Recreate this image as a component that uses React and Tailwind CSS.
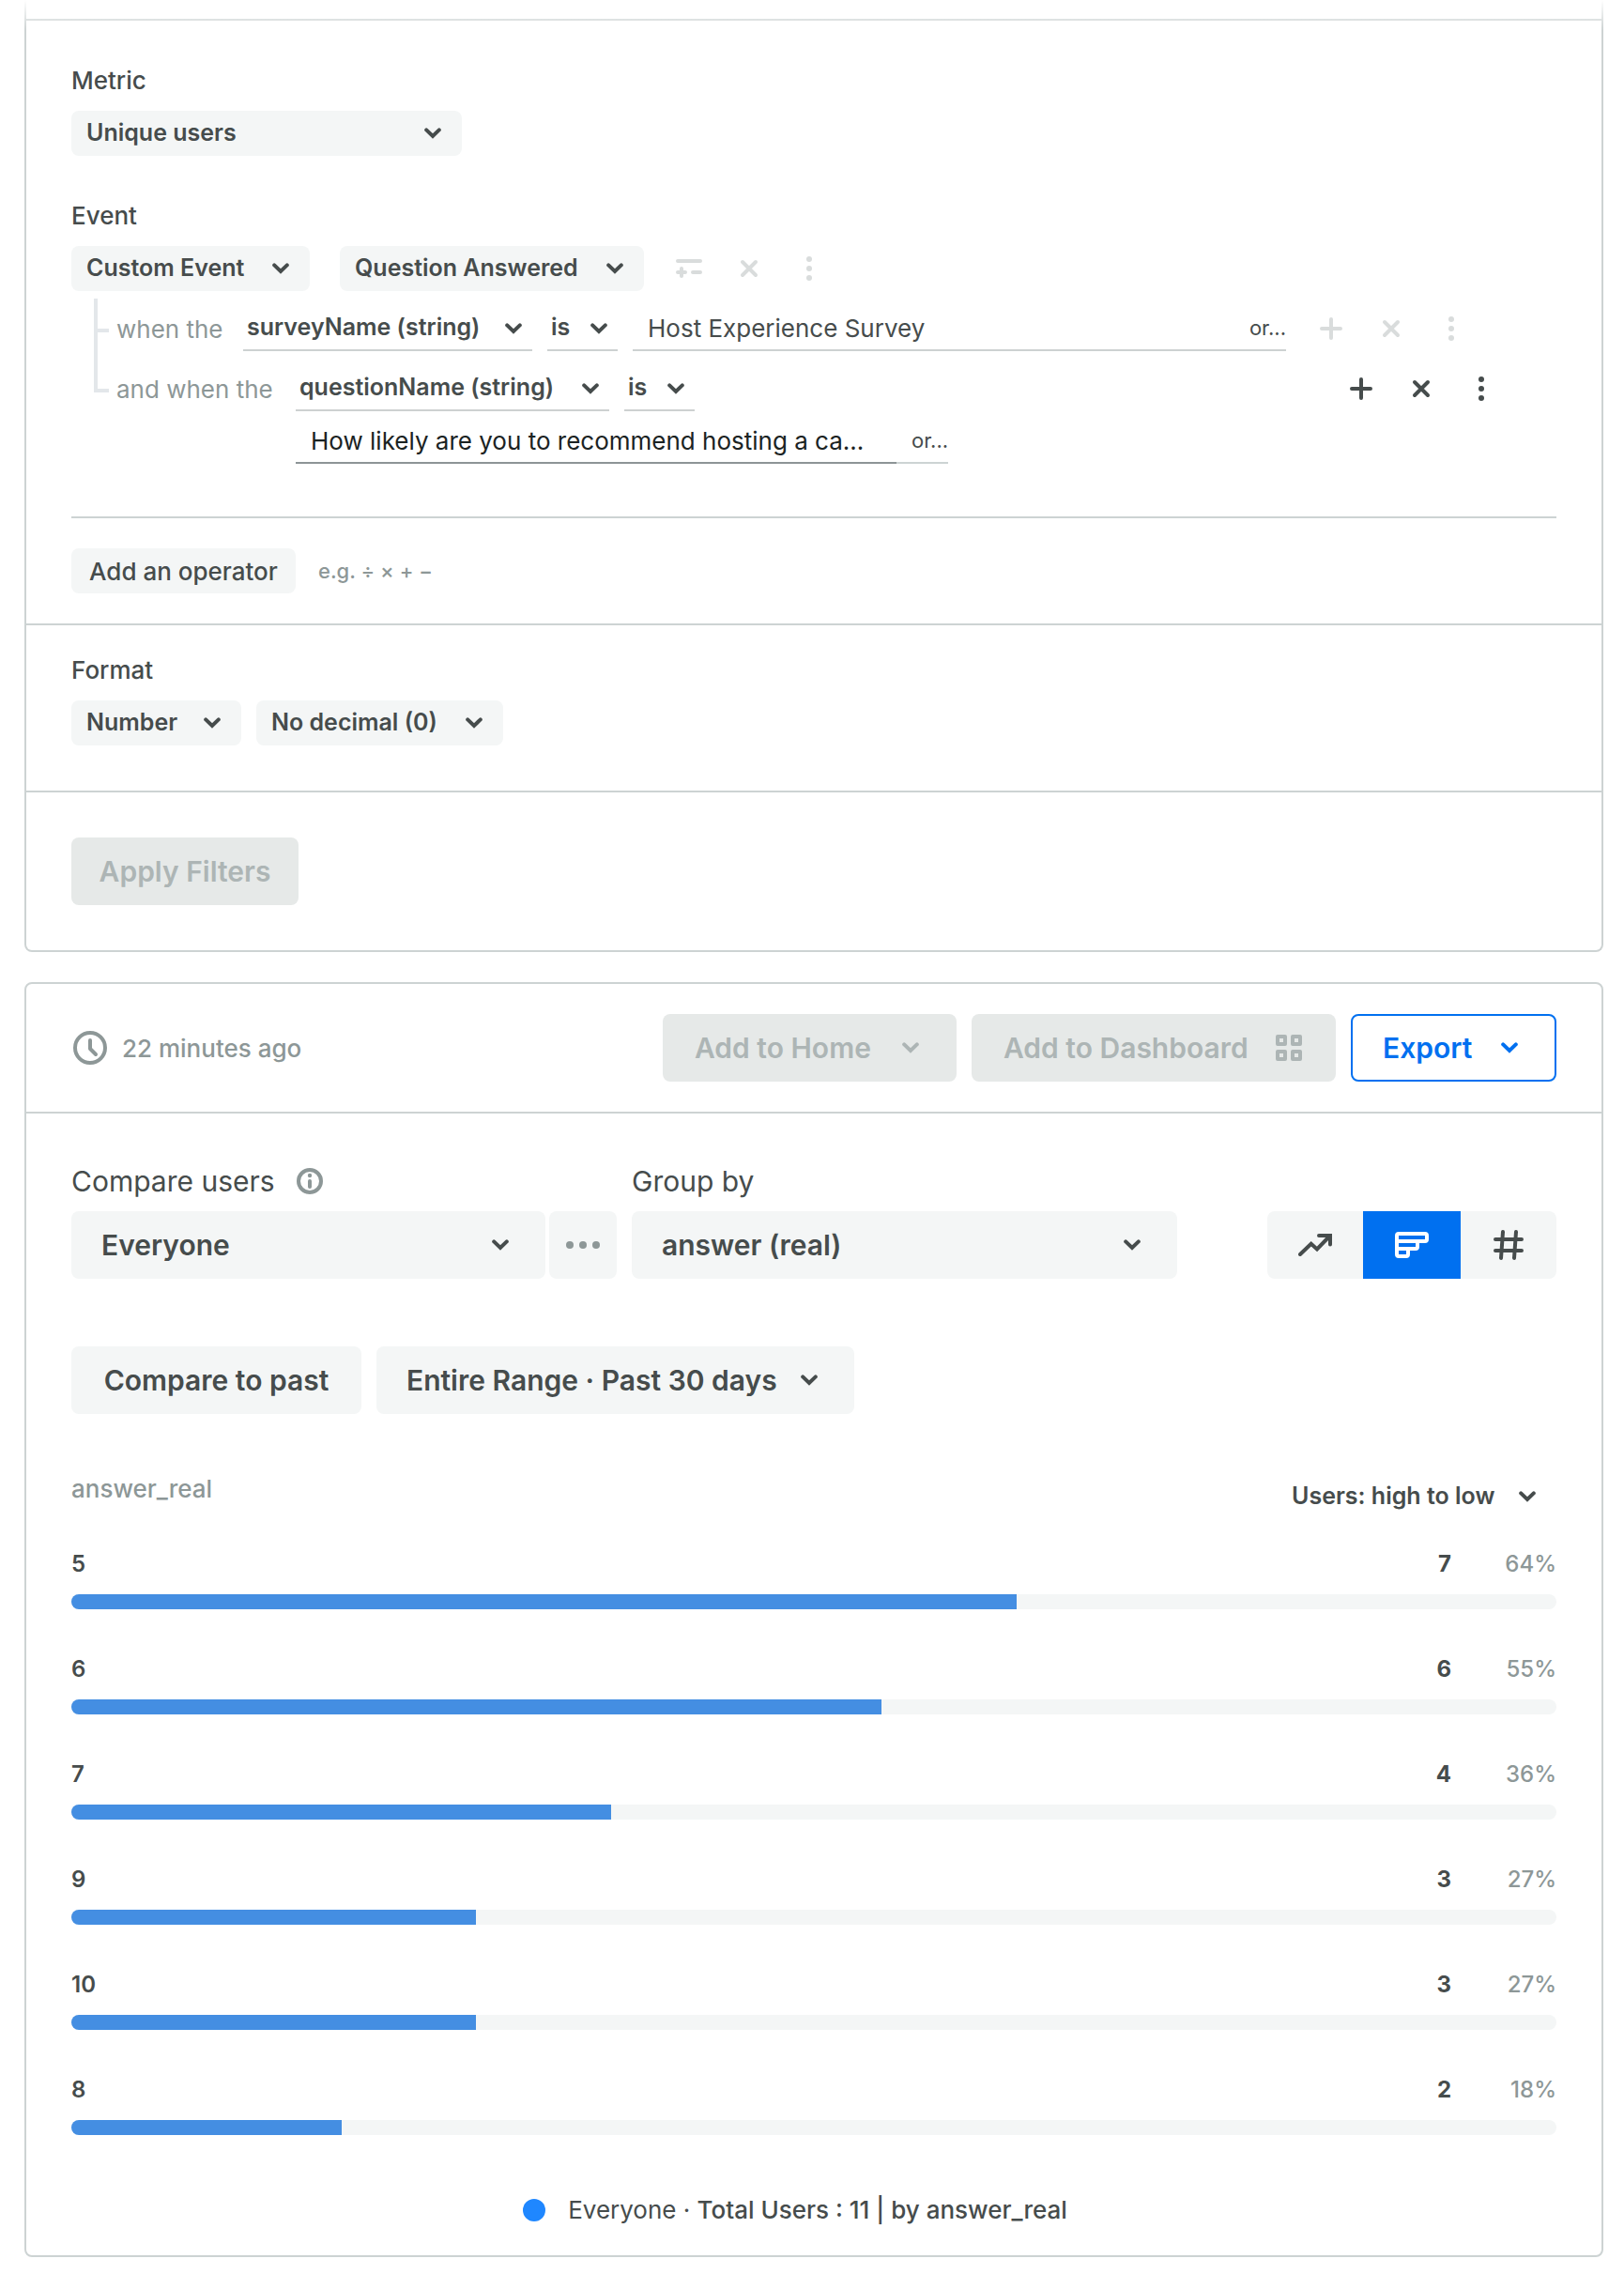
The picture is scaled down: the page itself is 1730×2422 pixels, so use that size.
const RESULTS = [
    { answer: '5', users: 7, share: '64%' },
    { answer: '6', users: 6, share: '55%' },
    { answer: '7', users: 4, share: '36%' },
    { answer: '9', users: 3, share: '27%' },
    { answer: '10', users: 3, share: '27%' },
    { answer: '8', users: 2, share: '18%' },
]
const TOTAL_USERS = 11

// Icons
const Chevron = ({ className = '' }) => (
    <svg className={`h-3 w-[18px] shrink-0 ${className}`} viewBox="0 0 18 12" fill="none" stroke="currentColor" strokeWidth="4" strokeLinecap="round" aria-hidden="true">
        <path d="M2.2 2.4 9 9l6.8-6.6" />
    </svg>
)

const PlusIcon = () => (
    <svg className="size-6" viewBox="0 0 24 24" stroke="currentColor" strokeWidth="4" strokeLinecap="round" aria-hidden="true">
        <path d="M12 2v20M2 12h20" />
    </svg>
)

const CloseIcon = () => (
    <svg className="size-5" viewBox="0 0 20 20" stroke="currentColor" strokeWidth="4" strokeLinecap="round" aria-hidden="true">
        <path d="m3 3 14 14M17 3 3 17" />
    </svg>
)

const KebabIcon = () => (
    <svg className="h-[26px] w-1.5" viewBox="0 0 6 26" fill="currentColor" aria-hidden="true">
        <circle cx="3" cy="3" r="3" />
        <circle cx="3" cy="13" r="3" />
        <circle cx="3" cy="23" r="3" />
    </svg>
)

const OperatorIcon = () => (
    <svg className="h-5 w-7" viewBox="0 0 28 20" stroke="currentColor" strokeWidth="4" strokeLinecap="round" aria-hidden="true">
        <path d="M2 2h24M2 14h8M6 10v8M18 14h8" />
    </svg>
)

const ClockIcon = () => (
    <svg className="size-9" viewBox="0 0 36 36" fill="none" stroke="currentColor" strokeWidth="4" strokeLinecap="round" strokeLinejoin="round" aria-hidden="true">
        <circle cx="18" cy="18" r="16" />
        <path d="M18 10v9l6 6" />
    </svg>
)

const InfoIcon = () => (
    <svg className="size-7" viewBox="0 0 28 28" fill="none" stroke="currentColor" strokeLinecap="round" aria-hidden="true">
        <circle cx="14" cy="14" r="12" strokeWidth="4" />
        <path d="M14 14v6" strokeWidth="4" />
        <circle cx="14" cy="8" r="2.2" fill="currentColor" stroke="none" />
    </svg>
)

const GridIcon = () => (
    <svg className="size-7" viewBox="0 0 28 28" fill="none" stroke="currentColor" strokeWidth="4" strokeLinejoin="round" aria-hidden="true">
        <path d="M2 2h8v8H2zM18 2h8v8h-8zM2 18h8v8H2zM18 18h8v8h-8z" />
    </svg>
)

const TrendIcon = () => (
    <svg className="h-6 w-9" viewBox="0 0 36 24" fill="none" stroke="currentColor" strokeWidth="4" strokeLinecap="round" aria-hidden="true">
        <path d="M2 22 13.7 10.7l6.3 5.800L33.500 2.500" />
        <path d="M22 2h12v9.500" />
    </svg>
)

const BarsIcon = () => (
    <svg className="h-7 w-9" viewBox="0 0 36 28" fill="none" stroke="currentColor" strokeWidth="4" aria-hidden="true">
        <path d="M4 2h28a2 2 0 0 1 2 2v4a2 2 0 0 1-2 2H2V4a2 2 0 0 1 2-2z" />
        <path d="M2 10h22v6a2 2 0 0 1-2 2H2z" />
        <path d="M2 18h12v6a2 2 0 0 1-2 2H4a2 2 0 0 1-2-2z" />
    </svg>
)

const HashIcon = () => (
    <svg className="size-8" viewBox="0 0 32 32" stroke="currentColor" strokeWidth="4" strokeLinecap="round" aria-hidden="true">
        <path d="M10 2 8 30M24 2l-2 28M2 10h28M2 22h28" />
    </svg>
)

// Select with its own chevron stacked in the same grid cell
function Dropdown({ id, label, value, variant = 'small', className = '' }) {
    const boxes = {
        small: 'h-12 rounded-lg bg-[#f4f6f6] pl-4 text-[25px]',
        large: 'h-[72px] rounded-lg bg-[#f4f6f6] pl-8 text-[30px]',
        line: 'h-12 border-b-2 border-[#cdd1d1] pl-1 text-[25px]',
        plain: 'h-12 text-[25px]',
    }
    const arrows = { small: 'mr-[22px]', large: 'mr-[39px]', line: 'mr-[11px]', plain: 'mr-[22px]' }
    return (
        <div className={`grid items-center ${className}`}>
            <select id={id} aria-label={label} className={`col-start-1 row-start-1 w-full appearance-none font-semibold outline-none ${boxes[variant]}`}>
                <option>{value}</option>
            </select>
            <Chevron className={`pointer-events-none col-start-1 row-start-1 justify-self-end ${arrows[variant]}`} />
        </div>
    )
}

function IconButton({ label, children }) {
    return (
        <button type="button" aria-label={label} className="flex h-12 w-16 items-center justify-center">
            {children}
        </button>
    )
}

function RowActions({ className = '' }) {
    return (
        <div className={`flex shrink-0 ${className}`}>
            <IconButton label="Add condition"><PlusIcon /></IconButton>
            <IconButton label="Remove condition"><CloseIcon /></IconButton>
            <IconButton label="More"><KebabIcon /></IconButton>
        </div>
    )
}

function EventFilters() {
    return (
        <div className="flex pl-6">
            <div className="mt-2 w-4 shrink-0">
                <div className="h-9 border-b-4 border-l-4 border-[#e3e7ea]" />
                <div className="h-16 border-b-4 border-l-4 border-[#e3e7ea]" />
            </div>
            <div className="min-w-0 flex-1 pt-4 pl-2">
                <div className="flex items-center pr-20">
                    <span className="w-[135px] shrink-0 text-[26px] text-[#8d9797]">when the</span>
                    <Dropdown label="Property" value="surveyName (string)" variant="line" className="w-[308px] shrink-0" />
                    <Dropdown label="Comparison" value="is" variant="line" className="ml-4 w-[75px] shrink-0" />
                    <div className="ml-4 flex h-12 min-w-0 flex-1 items-center border-b-2 border-[#cdd1d1]">
                        <input aria-label="Survey name" defaultValue="Host Experience Survey" className="min-w-0 flex-1 pl-4 text-[26px] outline-none" />
                        <button type="button" className="text-[22px]">or...</button>
                    </div>
                    <RowActions className="ml-4 text-[#d9dcdc]" />
                </div>
                <div className="mt-4 flex items-center pr-12">
                    <span className="w-[191px] shrink-0 text-[26px] text-[#8d9797]">and when the</span>
                    <Dropdown label="Property" value="questionName (string)" variant="line" className="w-[334px] shrink-0" />
                    <Dropdown label="Comparison" value="is" variant="line" className="ml-4 w-[75px] shrink-0" />
                    <RowActions className="ml-auto" />
                </div>
                <div className="mt-2 flex pl-[191px]">
                    <input
                        aria-label="Question name"
                        defaultValue="How likely are you to recommend hosting a ca..."
                        className="h-12 w-[640px] border-b-2 border-[#8d9496] px-4 text-[26px] text-[#1b2323] outline-none"
                    />
                    <button type="button" className="h-12 border-b-2 border-[#cdd3d3] pl-4 text-[22px]">or...</button>
                </div>
            </div>
        </div>
    )
}

function QueryPanel() {
    return (
        <section className="rounded-b-lg border-2 border-t-0 border-[#cdd3d3]">
            <div className="h-[22px] border-b-2 border-[#cdd3d3]" />
            <div className="border-b-2 border-[#cdd3d3] px-12 pt-12 pb-8">
                <label htmlFor="metric" className="block text-[26px] leading-8 font-medium">Metric</label>
                <Dropdown id="metric" value="Unique users" className="mt-4 w-[416px]" />

                <label htmlFor="event" className="mt-12 block text-[26px] leading-8 font-medium">Event</label>
                <div className="mt-4 flex items-center">
                    <Dropdown id="event" value="Custom Event" className="w-[254px]" />
                    <Dropdown label="Event name" value="Question Answered" className="ml-8 w-[324px]" />
                    <div className="ml-4 flex text-[#d9dcdc]">
                        <IconButton label="Add operator to event"><OperatorIcon /></IconButton>
                        <IconButton label="Remove event"><CloseIcon /></IconButton>
                        <IconButton label="More"><KebabIcon /></IconButton>
                    </div>
                </div>
                <EventFilters />

                <hr className="mt-14 border-t-2 border-[#cdd3d3]" />
                <div className="mt-8 flex items-center gap-6">
                    <button type="button" className="h-12 w-[239px] rounded-lg bg-[#f4f6f6] text-[26px] font-medium">Add an operator</button>
                    <span className="text-[22px] font-medium text-[#8d9797]">e.g. ÷ × + −</span>
                </div>
            </div>
            <div className="border-b-2 border-[#cdd3d3] px-12 pt-8 pb-12">
                <label htmlFor="format" className="block text-[26px] leading-8 font-medium">Format</label>
                <div className="mt-4 flex gap-4">
                    <Dropdown id="format" value="Number" className="w-[181px]" />
                    <Dropdown label="Decimals" value="No decimal (0)" className="w-[263px]" />
                </div>
            </div>
            <div className="p-12">
                <button type="button" disabled className="h-[72px] w-[242px] rounded-lg bg-[#e6e9e8] text-[30px] font-semibold text-[#adb5b5]">
                    Apply Filters
                </button>
            </div>
        </section>
    )
}

function ResultBar({ answer, users, share }) {
    return (
        <li>
            <div className="flex text-2xl leading-8">
                <span className="flex-1 font-semibold">{answer}</span>
                <span className="font-bold">{users}</span>
                <span className="w-28 text-right font-medium text-[#8d9797]">{share}</span>
            </div>
            <div className="mt-4 h-4 overflow-hidden rounded-full bg-[#f4f6f6]">
                <div className="h-full bg-[#448ee2]" style={{ width: `${(users / TOTAL_USERS) * 100}%` }} />
            </div>
        </li>
    )
}

function ResultsPanel() {
    return (
        <section className="mt-8 rounded-lg border-2 border-[#cdd3d3]">
            <div className="flex items-center border-b-2 border-[#cdd3d3] px-12 py-8">
                <div className="flex flex-1 items-center gap-4 pl-0.5 text-[26px] font-medium text-[#8d9797]">
                    <ClockIcon />
                    22 minutes ago
                </div>
                <div className="flex gap-4 text-[30px] font-semibold">
                    <button type="button" disabled className="flex h-[72px] w-[313px] items-center justify-between rounded-lg bg-[#e6e9e8] pr-10 pl-[34px] text-[#adb5b5]">
                        Add to Home <Chevron />
                    </button>
                    <button type="button" disabled className="flex h-[72px] w-[388px] items-center justify-between rounded-lg bg-[#e6e9e8] pr-9 pl-[34px] text-[#adb5b5]">
                        Add to Dashboard <GridIcon />
                    </button>
                    <button type="button" className="flex h-[72px] w-[219px] items-center justify-between rounded-lg border-2 border-[#0070f0] pr-[39px] pl-8 text-[#0070f0]">
                        Export <Chevron />
                    </button>
                </div>
            </div>

            <div className="px-12 pt-12 pb-8">
                <div className="flex items-end">
                    <div>
                        <div className="flex h-12 items-center gap-5">
                            <label htmlFor="compare" className="w-[220px] text-[30px]">Compare users</label>
                            <span className="text-[#8d9797]"><InfoIcon /></span>
                        </div>
                        <div className="mt-2 flex gap-1">
                            <Dropdown id="compare" value="Everyone" variant="large" className="w-[505px]" />
                            <button type="button" aria-label="More cohorts" className="flex size-[72px] items-center justify-center gap-1.5 rounded-lg bg-[#f4f6f6]">
                                <span className="size-2 rounded-full bg-[#8d9797]" />
                                <span className="size-2 rounded-full bg-[#8d9797]" />
                                <span className="size-2 rounded-full bg-[#8d9797]" />
                            </button>
                        </div>
                    </div>
                    <div className="ml-4">
                        <label htmlFor="group" className="flex h-12 items-center text-[30px]">Group by</label>
                        <Dropdown id="group" value="answer (real)" variant="large" className="mt-2 w-[581px]" />
                    </div>
                    <div className="ml-auto flex h-[72px] overflow-hidden rounded-lg bg-[#f4f6f6]">
                        <button type="button" aria-label="Line chart" className="flex w-[102px] items-center justify-center"><TrendIcon /></button>
                        <button type="button" aria-label="Bar chart" aria-pressed="true" className="flex w-[104px] items-center justify-center bg-[#0070f0] text-white"><BarsIcon /></button>
                        <button type="button" aria-label="Number" className="flex w-[102px] items-center justify-center"><HashIcon /></button>
                    </div>
                </div>

                <div className="mt-[72px] flex gap-4">
                    <button type="button" className="h-[72px] w-[309px] rounded-lg bg-[#f4f6f6] text-[30px] font-semibold">Compare to past</button>
                    <Dropdown label="Date range" value="Entire Range · Past 30 days" variant="large" className="w-[509px]" />
                </div>

                <div className="mt-16 flex items-start justify-between">
                    <span className="text-[26px] leading-8 font-medium text-[#8d9797]">answer_real</span>
                    <Dropdown label="Sort order" value="Users: high to low" variant="plain" className="w-[282px]" />
                </div>
                <ul className="mt-8 space-y-12">
                    {RESULTS.map((row) => (
                        <ResultBar key={row.answer} {...row} />
                    ))}
                </ul>

                <div className="mt-16 flex items-center justify-center gap-6 pr-10 text-[26px] leading-8">
                    <span className="size-6 rounded-full bg-[#1f87ff]" />
                    <span>
                        Everyone · <span className="font-medium">Total Users : 11 | by answer_real</span>
                    </span>
                </div>
            </div>
        </section>
    )
}

export default function App() {
    return (
        <main className="relative bg-white pr-[22px] pb-[18px] pl-[26px] font-[Inter,sans-serif] text-[#464c4c]">
            <QueryPanel />
            <ResultsPanel />
            <div className="pointer-events-none absolute inset-x-0 top-0 h-8 bg-linear-to-b from-white to-transparent" />
        </main>
    )
}
